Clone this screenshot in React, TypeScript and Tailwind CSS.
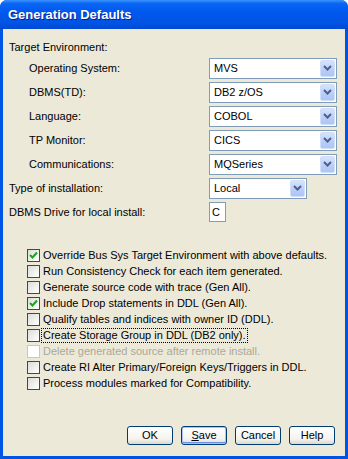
import type { ReactNode } from 'react'

const FONT = { fontFamily: 'Tahoma, "Liberation Sans", Arial, sans-serif' }

function Chevron() {
  return (
    <svg width="9" height="6" viewBox="0 0 9 6" aria-hidden>
      <path d="M1 1 L4.5 4.5 L8 1" fill="none" stroke="#4d6185" strokeWidth="2" />
    </svg>
  )
}

function Combo({ value, width }: { value: string; width: string }) {
  return (
    <div className={`flex h-[21px] items-center border border-[#7f9db9] bg-white p-[1px] ${width}`}>
      <span className="flex-1 pl-[3px] text-black">{value}</span>
      <span className="flex h-[17px] w-[15px] items-center justify-center rounded-[2px] border border-[#d2def9] bg-[linear-gradient(to_bottom,#d6e3fe,#b8cdf8_60%,#aec4f6)]">
        <Chevron />
      </span>
    </div>
  )
}

function Row({ label, indent, children }: { label: string; indent?: boolean; children: ReactNode }) {
  return (
    <div className="flex h-[24px] items-center">
      <span className={`w-[200px] ${indent ? 'pl-[20px]' : ''}`}>{label}</span>
      {children}
    </div>
  )
}

function Check({ label, checked, disabled, focus }: { label: string; checked?: boolean; disabled?: boolean; focus?: boolean }) {
  return (
    <div className="flex h-[16px] items-center">
      <span
        className={`flex h-[13px] w-[13px] items-center justify-center border ${
          disabled
            ? 'border-[#cac8bb] bg-white'
            : 'border-[#1c5180] bg-[linear-gradient(135deg,#dcdcd7,#ffffff)]'
        }`}
      >
        {checked && (
          <svg width="9" height="9" viewBox="0 0 9 9" aria-hidden>
            <path d="M1 4 L3.5 6.5 L8 1.5" fill="none" stroke="#21a121" strokeWidth="2" />
          </svg>
        )}
      </span>
      <span
        className={`ml-[2px] px-[1px] leading-[13px] ${disabled ? 'text-[#aca899]' : 'text-black'} ${
          focus ? 'outline outline-1 outline-dotted outline-black' : ''
        }`}
      >
        {label}
      </span>
    </div>
  )
}

function Btn({ children, isDefault }: { children: ReactNode; isDefault?: boolean }) {
  return (
    <button
      type="button"
      className={`flex h-[19px] w-[46px] items-center justify-center rounded-[3px] border border-[#003c74] bg-[linear-gradient(to_bottom,#ffffff,#f4f3ee_70%,#dcd9cc)] text-black ${
        isDefault ? 'shadow-[inset_0_0_0_1px_#a8c4f4,inset_0_-1px_0_1px_#6c8ee8]' : ''
      }`}
    >
      {children}
    </button>
  )
}

export default function App() {
  return (
    <div
      className="flex h-[459px] w-[348px] flex-col overflow-hidden rounded-t-[7px] bg-[#0054e3] text-[11px] text-black"
      style={FONT}
    >
      <div className="flex h-[29px] items-center bg-[linear-gradient(to_bottom,#3d93ff,#0a66f3_12%,#0058ee_40%,#0054e3_80%,#0049d2)] pl-[8px]">
        <span className="text-[13px] font-bold text-white [text-shadow:1px_1px_0_#0a1e8c]">Generation Defaults</span>
      </div>
      <div className="mx-[3px] mb-[3px] flex flex-1 flex-col bg-[#ece9d8] pl-[6px]">
        <div className="mt-[12px] h-[15px] leading-[13px]">Target Environment:</div>
        <div className="mt-[0px] flex flex-col">
          <Row label="Operating System:" indent>
            <Combo value="MVS" width="w-[128px]" />
          </Row>
          <Row label="DBMS(TD):" indent>
            <Combo value="DB2 z/OS" width="w-[128px]" />
          </Row>
          <Row label="Language:" indent>
            <Combo value="COBOL" width="w-[128px]" />
          </Row>
          <Row label="TP Monitor:" indent>
            <Combo value="CICS" width="w-[128px]" />
          </Row>
          <Row label="Communications:" indent>
            <Combo value="MQSeries" width="w-[128px]" />
          </Row>
          <Row label="Type of installation:">
            <Combo value="Local" width="w-[98px]" />
          </Row>
          <Row label="DBMS Drive for local install:">
            <div className="flex h-[20px] w-[17px] items-center border border-[#7f9db9] bg-white pl-[2px]">C</div>
          </Row>
        </div>
        <div className="ml-[18px] mt-[23px] flex flex-col">
          <Check label="Override Bus Sys Target Environment with above defaults." checked />
          <Check label="Run Consistency Check for each item generated." />
          <Check label="Generate source code with trace (Gen All)." />
          <Check label="Include Drop statements in DDL (Gen All)." checked />
          <Check label="Qualify tables and indices with owner ID (DDL)." />
          <Check label="Create Storage Group in DDL (DB2 only)." focus />
          <Check label="Delete generated source after remote install." disabled />
          <Check label="Create RI Alter Primary/Foreign Keys/Triggers in DDL." />
          <Check label="Process modules marked for Compatibility." />
        </div>
        <div className="mb-[11px] mr-[10px] mt-auto flex justify-end gap-[8px]">
          <Btn>OK</Btn>
          <Btn isDefault>
            <span>
              <span className="underline">S</span>ave
            </span>
          </Btn>
          <Btn>Cancel</Btn>
          <Btn>Help</Btn>
        </div>
      </div>
    </div>
  )
}
